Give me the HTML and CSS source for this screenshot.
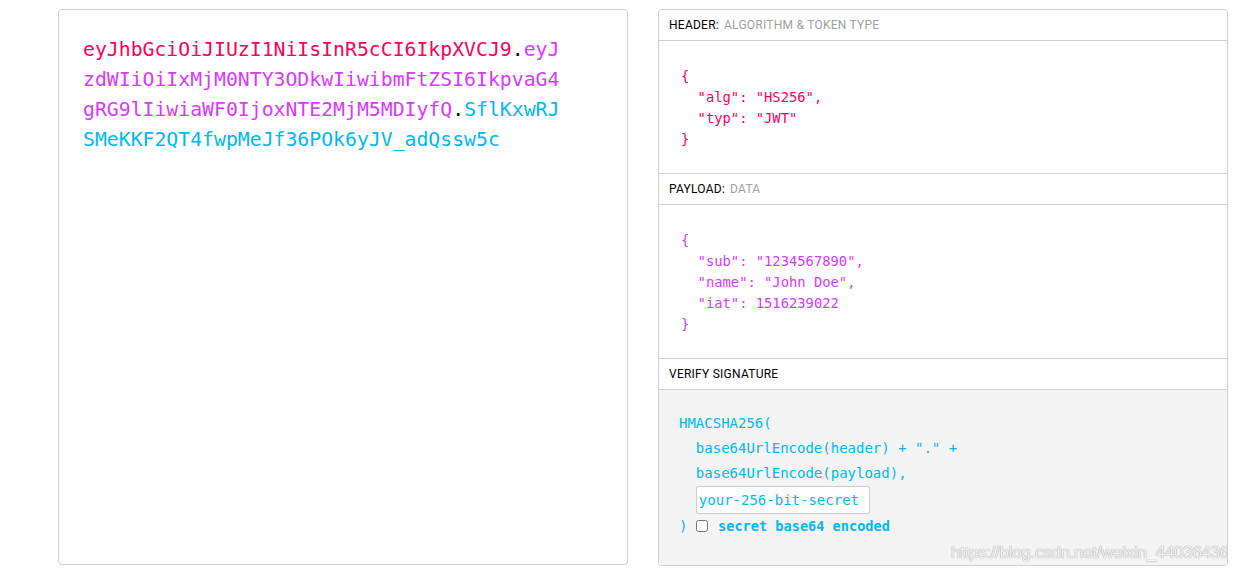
FILE: index.html
```html
<!DOCTYPE html>
<html lang="en">
<head>
    <meta charset="UTF-8">
    <meta name="viewport" content="width=device-width, initial-scale=1.0">
    <title>JWT Debugger</title>
    <link rel="stylesheet" href="styles.css">
</head>
<body>
    <div class="debugger">
        <!-- Encoded token -->
        <div class="panel encoded">
            <div class="token"><span class="t-header">eyJhbGciOiJIUzI1NiIsInR5cCI6IkpXVCJ9</span><span class="t-dot">.</span><span class="t-payload">eyJzdWIiOiIxMjM0NTY3ODkwIiwibmFtZSI6IkpvaG4gRG9lIiwiaWF0IjoxNTE2MjM5MDIyfQ</span><span class="t-dot">.</span><span class="t-sig">SflKxwRJSMeKKF2QT4fwpMeJf36POk6yJV_adQssw5c</span></div>
        </div>

        <!-- Decoded -->
        <div class="panel decoded">
            <div class="block-title">HEADER:<span class="sub">ALGORITHM &amp; TOKEN TYPE</span></div>
            <div class="block-body json header-json">
                <div>{</div>
                <div class="indent">"alg": "HS256",</div>
                <div class="indent">"typ": "JWT"</div>
                <div>}</div>
            </div>

            <div class="block-title">PAYLOAD:<span class="sub">DATA</span></div>
            <div class="block-body json payload-json">
                <div>{</div>
                <div class="indent">"sub": "1234567890",</div>
                <div class="indent">"name": "John Doe",</div>
                <div class="indent">"iat": 1516239022</div>
                <div>}</div>
            </div>

            <div class="block-title">VERIFY SIGNATURE</div>
            <div class="block-body signature">
                <div>HMACSHA256(</div>
                <div class="indent">base64UrlEncode(header) + "." +</div>
                <div class="indent">base64UrlEncode(payload),</div>
                <div class="indent secret-row"><input type="text" class="secret" value="your-256-bit-secret"></div>
                <div class="close-row">) <label class="b64"><input type="checkbox"> secret base64 encoded</label></div>
                <div class="watermark">https://blog.csdn.net/weixin_44036436</div>
            </div>
        </div>
    </div>
</body>
</html>
```

FILE: styles.css
```css
body {
    margin: 0;
    background-color: #fff;
    font-family: Roboto, Arial, sans-serif;
}
.debugger {
    display: flex;
    gap: 30px;
    padding: 9px 0 0 58px;
}
.panel {
    width: 570px;
    box-sizing: border-box;
    border: 1px solid #d0d0d0;
    border-radius: 4px;
    background-color: #fff;
}
.encoded {
    height: 556px;
    padding: 25px 24px;
}
.decoded {
    height: 557px;
    display: flex;
    flex-direction: column;
    overflow: hidden;
}
.token {
    width: 40.3ch;
    font-family: "DejaVu Sans Mono", "Liberation Mono", monospace;
    font-size: 19.8px;
    line-height: 30px;
    word-break: break-all;
}
.t-header { color: #fb015b; }
.t-payload { color: #d63aff; }
.t-sig { color: #00b9f1; }
.t-dot { color: #000; }

.block-title {
    height: 30px;
    line-height: 31px;
    padding-left: 10px;
    font-size: 12px;
    letter-spacing: 0.25px;
    color: #000;
    border-bottom: 1px solid #d0d0d0;
}
.block-title .sub {
    color: #a0a0a0;
    margin-left: 5px;
}
.block-body {
    border-bottom: 1px solid #d0d0d0;
}
.json {
    padding: 25px 22px 23px;
    font-family: "DejaVu Sans Mono", "Liberation Mono", monospace;
    font-size: 13.8px;
    line-height: 21px;
}
.json .indent,
.signature .indent {
    padding-left: 2ch;
}
.header-json {
    height: 133px;
    box-sizing: border-box;
    color: #fb015b;
}
.payload-json {
    height: 154px;
    box-sizing: border-box;
    color: #d63aff;
}
.signature {
    position: relative;
    flex: 1;
    border-bottom: none;
    background-color: #f4f4f4;
    padding: 21px 20px 0;
    font-family: "DejaVu Sans Mono", "Liberation Mono", monospace;
    font-size: 14px;
    line-height: 25px;
    color: #00b9f1;
}
.secret-row {
    height: 28px;
    line-height: 28px;
}
input.secret {
    width: 174px;
    height: 28px;
    box-sizing: border-box;
    margin: 0;
    padding: 0 2px;
    border: 1px solid #ccc;
    border-radius: 2px;
    background-color: #fff;
    font-family: "DejaVu Sans Mono", "Liberation Mono", monospace;
    font-size: 14px;
    color: #00b9f1;
    vertical-align: top;
    outline: none;
}
.b64 {
    font-weight: bold;
    font-size: 13.6px;
}
.b64 input {
    width: 12px;
    height: 12px;
    margin: 0 2px 0 0;
    vertical-align: -1px;
}
.watermark {
    position: absolute;
    right: -2px;
    bottom: 2px;
    font-family: Arial, "Liberation Sans", sans-serif;
    font-size: 17px;
    line-height: 20px;
    color: #f2f2f2;
    text-shadow: 0 0 1px #999, 0 0 1px #bbb;
    letter-spacing: -0.3px;
}
```
